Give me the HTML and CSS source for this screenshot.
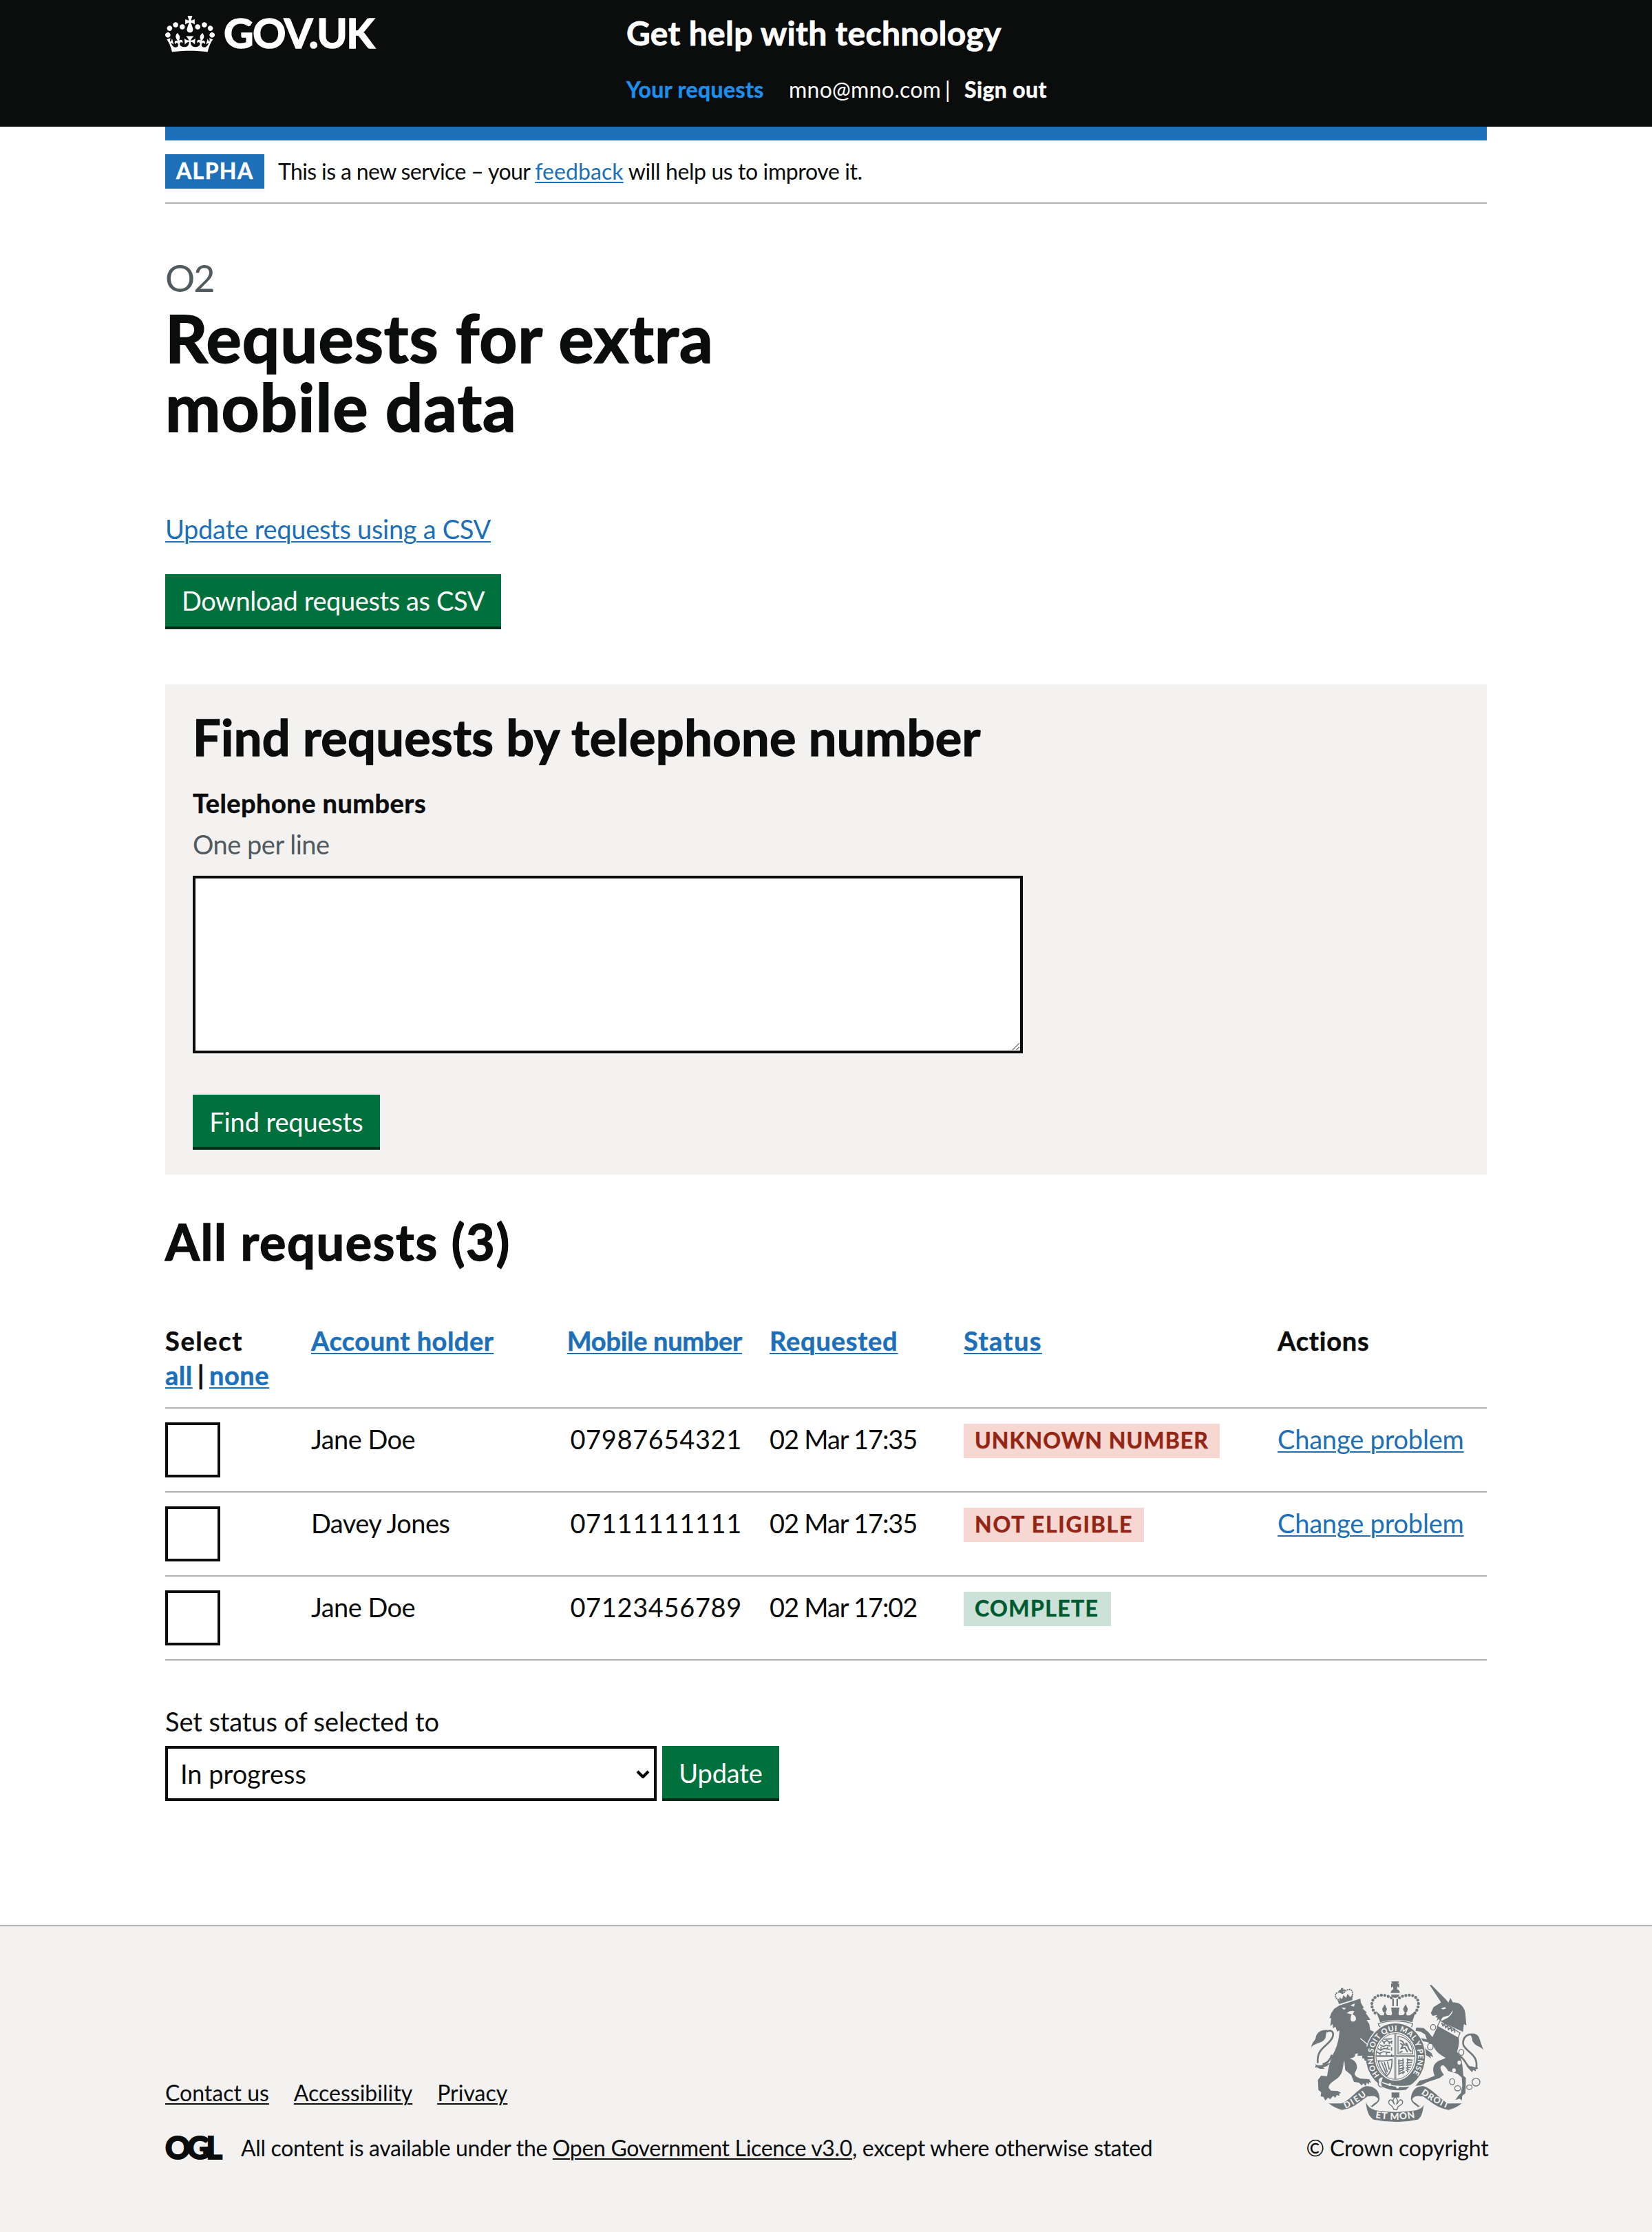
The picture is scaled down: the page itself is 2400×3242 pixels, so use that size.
FILE: index.html
```html
<!DOCTYPE html>
<html lang="en">
<head>
<meta charset="utf-8">
<title>Requests for extra mobile data – Get help with technology – GOV.UK</title>
<link rel="stylesheet" href="styles.css">
</head>
<body>
<header class="header">
  <div class="container header-grid">
    <a class="logo" href="#">
      <svg class="logo-crown" viewBox="0 0 132 97" width="72" height="53" aria-hidden="true"><path fill="currentColor" fill-rule="evenodd" d="M25 30.2c3.5 1.5 7.7-.2 9.1-3.7 1.5-3.6-.2-7.8-3.9-9.2-3.6-1.4-7.6.3-9.1 3.9-1.4 3.5.3 7.5 3.9 9zM9 39.5c3.6 1.5 7.8-.2 9.2-3.7 1.5-3.6-.2-7.8-3.9-9.1-3.6-1.5-7.6.2-9.1 3.8-1.4 3.5.3 7.5 3.8 9zM4.4 57.2c3.5 1.5 7.7-.2 9.1-3.8 1.5-3.6-.2-7.7-3.9-9.1-3.5-1.5-7.6.3-9.1 3.8-1.4 3.5.3 7.6 3.9 9.1zm38.3-21.4c3.5 1.5 7.7-.2 9.1-3.8 1.5-3.6-.2-7.7-3.9-9.1-3.6-1.5-7.6.3-9.1 3.8-1.3 3.6.4 7.7 3.9 9.1zm64.4-5.6c-3.6 1.5-7.8-.2-9.1-3.7-1.5-3.6.2-7.8 3.8-9.2 3.6-1.4 7.7.3 9.2 3.9 1.3 3.5-.4 7.5-3.9 9zm15.9 9.3c-3.6 1.5-7.7-.2-9.1-3.7-1.5-3.6.2-7.8 3.7-9.1 3.6-1.5 7.7.2 9.2 3.8 1.5 3.5-.3 7.5-3.8 9zm4.7 17.7c-3.6 1.5-7.8-.2-9.2-3.8-1.5-3.6.2-7.7 3.9-9.1 3.6-1.5 7.7.3 9.2 3.8 1.3 3.5-.4 7.6-3.9 9.1zM89.3 35.8c-3.6 1.5-7.8-.2-9.2-3.8-1.4-3.6.2-7.7 3.9-9.1 3.6-1.5 7.7.3 9.2 3.8 1.4 3.6-.3 7.7-3.9 9.1zM69.7 17.7l8.9 4.7V9.3l-8.9 2.8c-.2-.3-.5-.6-.9-.9L72.4 0H59.6l3.5 11.2c-.3.3-.6.5-.9.9l-8.8-2.8v13.1l8.8-4.7c.3.3.6.7.9.9l-5 15.4v.1c-.2.8-.4 1.6-.4 2.4 0 4.1 3.1 7.5 7 8.1h.2c.3 0 .7.1 1 .1.4 0 .7 0 1-.1h.2c4-.6 7.1-4.1 7.1-8.1 0-.8-.1-1.7-.4-2.4V34l-5.1-15.4c.4-.2.7-.6 1-.9zM66 92.8c16.9 0 32.8 1.1 47.1 3.2 4-16.9 8.9-26.7 14-33.5l-9.6-3.4c1 4.9 1.1 7.2 0 10.2-1.5-1.4-3-4.3-4.2-8.7L108.6 76c2.8-2 5-3.2 7.5-3.3-4.4 9.4-10 11.9-13.6 11.2-4.3-.8-6.3-4.6-5.6-7.9 1-4.7 5.7-5.9 8-.5 4.3-8.7-3-11.4-7.6-8.8 7.1-7.2 7.9-13.5 2.1-21.1-8 6.1-8.1 12.3-4.5 20.8-4.7-5.4-12.1-2.5-9.5 6.2 3.4-5.2 7.9-2 7.2 3.1-.6 4.3-6.4 7.8-13.5 7.2-10.3-.9-10.9-8-11.2-13.8 2.5-.5 7.1 1.8 11 7.3L80.2 60c-4.1 4.4-8 5.3-12.3 5.4 1.4-4.4 8-11.6 8-11.6H55.5s6.4 7.2 7.9 11.6c-4.2-.1-8-1-12.3-5.4l1.4 16.4c3.9-5.5 8.5-7.7 10.9-7.3-.3 5.8-.9 12.8-11.1 13.8-7.2.6-12.9-2.9-13.5-7.2-.7-5 3.8-8.3 7.1-3.1 2.7-8.7-4.6-11.6-9.4-6.2 3.7-8.5 3.6-14.7-4.6-20.8-5.8 7.6-5 13.9 2.2 21.1-4.7-2.6-11.9.1-7.7 8.8 2.3-5.5 7.1-4.2 8.1.5.7 3.3-1.3 7.1-5.7 7.9-3.5.7-9-1.8-13.5-11.2 2.5.1 4.7 1.3 7.5 3.3l-4.7-15.4c-1.2 4.4-2.7 7.2-4.3 8.7-1.1-3-.9-5.3 0-10.2l-9.5 3.4c5 6.9 9.9 16.7 14 33.5 14.8-2.1 30.8-3.2 47.7-3.2z"/></svg>
      <span class="logo-text">GOV.UK</span>
    </a>
    <div class="header-content">
      <a class="service-name" href="#">Get help with technology</a>
      <nav class="nav">
        <a class="nav-active" href="#">Your requests</a>
        <span class="nav-user"><span class="nav-email">mno@mno.com</span> <span class="nav-bar">|</span></span>
        <a class="nav-link" href="#">Sign out</a>
      </nav>
    </div>
  </div>
</header>

<div class="container">
  <div class="phase-banner">
    <strong class="phase-tag">Alpha</strong>
    <span class="phase-text">This is a new service – your <a class="link phase-link" href="#">feedback</a><span class="phase-tail"> will help us to improve it.</span></span>
  </div>

  <main class="main">
    <span class="caption">O2</span>
    <h1 class="title">Requests for extra mobile data</h1>
    <p class="csv-link"><a class="link" href="#">Update requests using a CSV</a></p>
    <a class="button button-download" href="#">Download requests as CSV</a>

    <form class="finder">
      <h2 class="heading finder-heading">Find requests by telephone number</h2>
      <label class="label" for="numbers">Telephone numbers</label>
      <span class="hint">One per line</span>
      <div class="textarea-wrap">
        <textarea class="textarea" id="numbers"></textarea>
        <svg class="grip" viewBox="0 0 12 12" width="12" height="12" aria-hidden="true"><path d="M1 11 11 1M6.500 11 11 6.500" stroke="#777" stroke-width="1.300" fill="none"/></svg>
      </div>
      <button class="button button-find" type="button">Find requests</button>
    </form>

    <h2 class="heading list-heading">All requests (3)</h2>
    <table class="table">
      <colgroup><col class="c-select"><col class="c-holder"><col class="c-mobile"><col class="c-requested"><col class="c-status"><col class="c-actions"></colgroup>
      <thead>
        <tr>
          <th><span class="h-select">Select</span><br><a class="link" href="#">all</a><span class="pipe">|</span><a class="link" href="#">none</a></th>
          <th><a class="link" href="#">Account holder</a></th>
          <th class="num-head"><a class="link" href="#">Mobile number</a></th>
          <th class="h-wide"><a class="link" href="#">Requested</a></th>
          <th class="h-status"><a class="link" href="#">Status</a></th>
          <th class="h-wide">Actions</th>
        </tr>
      </thead>
      <tbody>
        <tr>
          <td class="check"><input class="checkbox" type="checkbox"></td>
          <td class="name">Jane Doe</td>
          <td class="num">07987654321</td>
          <td class="date">02 Mar 17:35</td>
          <td class="status"><strong class="tag tag-red tag-unknown">Unknown number</strong></td>
          <td class="action"><a class="link" href="#">Change problem</a></td>
        </tr>
        <tr>
          <td class="check"><input class="checkbox" type="checkbox"></td>
          <td class="name">Davey Jones</td>
          <td class="num">07111111111</td>
          <td class="date">02 Mar 17:35</td>
          <td class="status"><strong class="tag tag-red tag-ineligible">Not eligible</strong></td>
          <td class="action"><a class="link" href="#">Change problem</a></td>
        </tr>
        <tr>
          <td class="check"><input class="checkbox" type="checkbox"></td>
          <td class="name">Jane Doe</td>
          <td class="num">07123456789</td>
          <td class="date">02 Mar 17:02</td>
          <td class="status"><strong class="tag tag-green tag-complete">Complete</strong></td>
          <td></td>
        </tr>
      </tbody>
    </table>

    <label class="status-label" for="status">Set status of selected to</label>
    <div class="status-row">
      <div class="select-wrap">
        <select class="select" id="status"><option>In progress</option></select>
        <svg class="chevron" viewBox="0 0 20 12" width="20" height="12" aria-hidden="true"><path d="M2 2l8 8 8-8" fill="none" stroke="#000" stroke-width="4.200"/></svg>
      </div>
      <button class="button button-update" type="button">Update</button>
    </div>
  </main>
</div>

<footer class="footer">
  <div class="container footer-row">
    <div class="footer-main">
      <ul class="footer-links">
        <li><a class="footer-link" href="#">Contact us</a></li>
        <li><a class="footer-link" href="#">Accessibility</a></li>
        <li><a class="footer-link" href="#">Privacy</a></li>
      </ul>
      <div class="licence">
        <span class="ogl">OGL</span>
        <span class="licence-text">All content is available under the <a class="footer-link" href="#">Open Government Licence v3.0</a>, except where otherwise stated</span>
      </div>
    </div>
    <a class="copyright" href="#">
      <svg class="crest" viewBox="132 114 750 612" width="250" height="204" aria-hidden="true">
        <defs>
          <path id="garter" d="M430 523A98 113 0 1 1 568 523"/>
          <path id="ribbon-left" d="M281 669Q328 648 376 608"/>
          <path id="ribbon-right" d="M610 603Q652 636 728 670"/>
          <path id="ribbon-mid" d="M411 709Q500 724 590 707"/>
        </defs>
        <g class="ink">
          <!-- lion -->
          <path d="M232 233l22-14 92-30 2 18 13 22-6 3 19 17-4 4 20 28-17 2 12 17 4 26 18 8-8 24-12 27 12 20 14 38-1 30-12-3-9 9-4-10-14 1 3-11-12 0 6-14-15 6-2-14-20 2 3-12-14 4c4 10-4 16-24 19 34 8 40 38 26 58-8 11 0 23 24 30l36 2 10 16-10-3-2 10-8-9-4 16-12-12-6 10-12-13-22-3-12-30-26-22-4-42c-8 24-2 56-30 78-14 10-40 24-38 42l10 12 30 2 14 8-9 3 2 10-12-4-6 12-10-8-12 14-10-6-12 12-8-16-12-2 2-18-12-10-2-44 14-18 26 2c6-40 14-70 26-96 20-36 26-70 28-104l-10 6-8-22-10 8-2-20-10 10 4-36-8 2 8-22z"/>
          <path d="M160 470c-6-70 50-72 66-116 6-22-12-32-26-20" fill="none" stroke="#6f777b" stroke-width="8"/>
          <path d="M222 434c-8 26-20 36-40 42" fill="none" stroke="#6f777b" stroke-width="9"/>
          <path d="M204 326c-24-4-48 8-52 30-2 18-18 20-20 46 12-20 46-16 60-38 6-14 2-24 12-38zM146 470c8 12 22 12 40 6l30-8c-12 16-24 20-34 18l8 8c-16 2-26 2-32-6l-10 2 4-10z"/>
          <path d="M244 190l9 23 58-18 1-24-10 12-12-15-6 18-12-12-6 18-10-10-2 18z"/>
          <path d="M262 143l10 0-2 7 8-2 1 9-8 0 2 10-10 2-2-9-8 2-2-8 9-4z"/>
          <path d="M250 194c-14-6-18-22-6-30 8-5 14-4 20 0m12-3c10-14 30-16 34-4 4 10 2 20-2 26" class="beads"/>
          <!-- unicorn -->
          <path d="M648 130l8 0 62 62 12 14 8-20 12 20c36-4 54 30 54 54l4 46-11-6-4 34-26-12-72-34 30-14c14-10 24-24 24-34l-16 22-28 8-10 16-8-8-8 8 4-14-10-2 8-10-20 4-8-12 12-26 32-20-4-8z"/>
          <path d="M684 307l91 54c4 26-4 46-8 60 20 18 24 52 28 104l11 10-2 66-14 12-2 20-10-8-18 6 12-18 12-12 6-32-2-36-18-16-40-12c-8-10-14-22-24-26-18 4-12 20 4 42l-18 14-54 18-30 14-22 2 18-22 32-8 34-14c-14-30-8-60 36-72l12-6c-24-14-42-24-54-52-10-12-30-22-54-20l22 34 24 18 8 18-14-8 4 12-18-12-16-2-2-14-12-12-8-26-14-4 6-18 20 0 26 6-8-22-20-12-22-4 4-14 32 2 22 20 16 20z"/>
          <path d="M776 436c28 18 28 40 48 56M846 346c-26-6-56 4-52 42 6 32 72 42 56 108" fill="none" stroke="#6f777b" stroke-width="8"/>
          <path d="M822 345c26-10 42 6 44 22l16 46c-14-18-38-16-48-40 0-10-2-20-12-28zM806 470c10 18 28 12 38 18l10-2 6 8-12 2 2 10-12-6-6 10c-10-16-24-20-26-40z"/>
          <!-- imperial crown -->
          <path d="M480 114h35l-7 11 7-3v20l-8-6-2 13h-15l-2-13-8 6v-20l7 3zM478 164a20 18 0 0 1 40 0zM480 172h36c-2 8-6 12-18 14-12-2-16-6-18-14zM485 190h7v32h-7zM503 190h7v32h-7z"/>
          <path d="M414 242l20 20 14 0 4-20 10 18 18 2 4-6-4-28h36l-4 28 4 6 18-2 10-18 4 20 14 0 26-20-16 50q-72-20-140 0z"/>
          <path d="M452 214l10 20-5 14h-12l-4-14zM543 214l10 20-4 14h-12l-5-14z"/>
          <path d="M410 252c-30-40-8-76 26-78 22 0 36 6 46 12M584 252c30-40 12-76-22-78-22 0-40 6-46 12" fill="none" stroke="#6f777b" stroke-width="13" stroke-linecap="round" stroke-dasharray="0 15"/>
          <path d="M424 298q74-24 150 0-2 18-18 20l-112 0q-18-4-20-20z" fill="#f3f2f1" stroke="#6f777b" stroke-width="4"/>
          <!-- garter and shield -->
          <ellipse cx="499" cy="441" rx="133" ry="149" class="paper"/>
          <ellipse cx="499" cy="441" rx="110" ry="125" fill="none" stroke="#6f777b" stroke-width="38"/>
          <ellipse cx="499" cy="441" rx="85" ry="100" fill="#f3f2f1" stroke="#6f777b" stroke-width="3"/>
          <path d="M413 440h172M498 340v200" stroke="#6f777b" stroke-width="8"/>
          <path d="M413 440h172M498 340v200" stroke="#f3f2f1" stroke-width="2"/>
          <path d="M446 366l38-2m-44 6l8 10 14-9 10 9 14-6m-54 16l14 8 12-6 20 4m-56 10l12 8 16-8 26 4m-62 10l16 8 16-8 30 4M450 376v12m22-12v12M436 398v12m28-12v12M432 424v10m28-10v10m22-62v14m0 14v16m0 14v12M510 462l22-4m-22 14l26-4m-24 16l22-6m-22 18l26-6m-24 16l22-8m-22 18l26-8M548 454l26 4m-28 12l26-4m-26 14l24-2m-26 14l22-4m-22 14l16-4M514 454v68m18-72v68m20-68v60" fill="none" stroke="#6f777b" stroke-width="5"/>
          <path d="M510 354v76h64c2-40-24-74-64-76z" fill="none" stroke="#6f777b" stroke-width="4"/>
          <path d="M518 370l12 6 8 14 14 4 6 16 10 10m-48-36l12 8-8 14 16-4 12 20m-22-4l-14 6m36-34l-10-8" fill="none" stroke="#6f777b" stroke-width="6"/>
          <path d="M424 460q32 4 60-6c0 34-6 60-24 72q-28-26-36-66zM438 466l22 52m-10-52l14 44m0-46l8 34" fill="none" stroke="#6f777b" stroke-width="5"/>
          <path d="M428 548q70 34 140 20l-22 20q-60 12-112-16z" stroke="#f3f2f1" stroke-width="5"/>
          <path d="M446 530c-20 0-26 14-20 24-8 14 8 24 18 18-12-14 0-22 2-42z" fill="#f3f2f1" stroke="#6f777b" stroke-width="4"/>
          <path d="M344 362l26 28 16 30 16 20 2 32-14-6-8 6-2-14-14 2-8-20z"/>
          <path d="M346 362l32 28" stroke="#f3f2f1" stroke-width="4"/>
          <!-- pendant -->
          <path d="M482 598h34v22h-34z"/>
          <path d="M498 614l10 18-4 16c8-4 6-16 16-18 12 0 14 16 2 22l-12 8-4 12h-14l-6-12-10-8c-10-6-8-22 4-22 10 2 8 14 14 18l-6-16z" fill="#f3f2f1" stroke="#6f777b" stroke-width="4"/>
          <!-- ribbons -->
          <path d="M208 646l54 0c40-14 64-56 102-74 40-6 66 18 66 54-4 20-24 26-32 36-16-8-14-18-2-28l-4-18-14-2c-40 28-60 52-112 60q-28-6-58-28z"/>
          <path d="M382 616c20-6 38 0 42 12-4 14-24 18-30 30-18-10-22-28-12-42z" class="paper"/>
          <path d="M788 646l-54 0c-40-14-62-54-106-74-40-8-60 20-62 54 4 20 22 26 32 36 16-8 14-18 2-28l4-18 14-2c40 28 62 50 112 60q30-6 58-28z"/>
          <path d="M614 616c-20-6-38 0-42 12 4 14 22 18 30 30 18-10 22-28 12-42z" class="paper"/>
          <path d="M370 640q10 28 42 36 86 14 176 0 28-8 34-24-6 54-26 64-94 20-192 0c-18-10-30-30-34-76z"/>
        </g>
        <g class="paper">
          <path d="M264 228l20 2-10 8zM302 218l20-8-4 14zM286 252q18-14 34-8l-8 14q18 6 14 24-10 14-22 2-2-18 4-26zM698 232l16-6 6 6-14 4z"/>
          <path d="M694 284l86 54-8 22-90-50z" stroke="#6f777b" stroke-width="4"/>
          <circle cx="474" cy="564" r="6"/><circle cx="508" cy="575" r="6"/>
          <ellipse cx="777" cy="468" rx="8" ry="9"/><ellipse cx="754" cy="502" rx="8" ry="9"/>
        </g>
        <path d="M700 294l6 14 6-10 6 18 8-10 4 18 10-10 4 16 12-8 2 16" fill="none" stroke="#6f777b" stroke-width="5"/>
        <g class="chain">
          <ellipse cx="663" cy="314" rx="11" ry="12"/><ellipse cx="651" cy="398" rx="12" ry="14"/><ellipse cx="786" cy="423" rx="11" ry="13"/><ellipse cx="746" cy="551" rx="11" ry="13"/><ellipse cx="770" cy="580" rx="13" ry="11"/><ellipse cx="821" cy="575" rx="12" ry="10"/><circle cx="850" cy="553" r="17" fill="none"/>
        </g>
        <g class="motto">
          <text font-size="33"><textPath href="#garter" textLength="495">HONI SOIT QUI MAL Y PENSE</textPath></text>
          <text font-size="38"><textPath href="#ribbon-left" textLength="110">DIEU</textPath></text>
          <text font-size="38"><textPath href="#ribbon-right" textLength="132">DROIT</textPath></text>
          <text font-size="41"><textPath href="#ribbon-mid" textLength="174">ET MON</textPath></text>
        </g>
      </svg>
      <span class="copyright-text">© Crown copyright</span>
    </a>
  </div>
</footer>
</body>
</html>
```
FILE: styles.css
```css
*, *::before, *::after { box-sizing: border-box; }
body {
  margin: 0;
  background: #fff;
  color: #0b0c0c;
  font: 38px/50px Lato, "Noto Sans", sans-serif;
}
h1, h2, p, ul { margin: 0; padding: 0; }
a { color: inherit; text-decoration: none; }
strong, th, .label, .nav-active, .nav-link { -webkit-text-stroke: .5px currentColor; }
.container { width: 1920px; margin: 0 auto; }
.link {
  color: #1d70b8;
  text-decoration: underline;
  text-decoration-thickness: 2px;
  text-underline-offset: 3px;
}

/* Header */
.header { height: 184px; background: #0b0c0c; color: #fff; }
.header-grid { display: grid; grid-template-columns: 670px 1fr; padding-top: 17px; }
.logo { display: flex; align-items: flex-start; gap: 13px; }
.logo-crown { margin-top: 6px; }
.logo-text { font-size: 60px; line-height: 60px; font-weight: 700; letter-spacing: -1.5px; -webkit-text-stroke: 1.6px #fff; }
.service-name { display: block; padding-top: 1px; font-size: 48px; line-height: 60px; font-weight: 700; letter-spacing: .3px; -webkit-text-stroke: .8px #fff; }
.nav { display: flex; margin-top: 32px; font-size: 32px; line-height: 40px; font-weight: 700; letter-spacing: .4px; }
.nav-active { width: 236px; color: #1d8feb; }
.nav-user { width: 255px; font-weight: 400; letter-spacing: .25px; word-spacing: -3px; }

/* Phase banner */
.phase-banner {
  display: flex;
  height: 112px;
  padding-top: 20px;
  border-top: 20px solid #1d70b8;
  border-bottom: 2px solid #b1b4b6;
  font-size: 32px;
  line-height: 48px;
}
.phase-tag {
  width: 144px;
  height: 50px;
  margin-right: 20px;
  padding-left: 16px;
  background: #1d70b8;
  color: #fff;
  letter-spacing: 1.4px;
  text-transform: uppercase;
}
.phase-text { padding-top: 1px; letter-spacing: -.62px; }
.phase-link { letter-spacing: .1px; }
.phase-tail { letter-spacing: -.4px; }

/* Main */
.main { padding: 78px 0 180px; }
.caption { display: block; margin-bottom: 6px; color: #505a5f; font-size: 54px; line-height: 60px; letter-spacing: -2px; }
.title { max-width: 1000px; font-size: 96px; line-height: 100px; letter-spacing: 1px; -webkit-text-stroke: 1.8px currentColor; }
.csv-link { margin: 103px 0 41px; letter-spacing: -.3px; }
.button {
  display: block;
  height: 80px;
  padding: 1px 0 0;
  border: 0;
  border-bottom: 4px solid #002d18;
  background: #00703c;
  color: #fff;
  font: inherit;
  line-height: 74px;
  text-align: center;
  letter-spacing: -.12px;
}
.button-download { width: 488px; letter-spacing: -.4px; }
.button-find { width: 272px; }
.button-update { width: 170px; }

.finder { margin-top: 80px; padding: 38px 40px 36px; background: #f3f2f1; }
.heading { font-size: 72px; line-height: 76px; letter-spacing: .4px; -webkit-text-stroke: 1.4px currentColor; }
.label { display: block; margin-top: 33px; font-weight: 700; letter-spacing: .45px; }
.hint { display: block; margin-top: 10px; color: #505a5f; letter-spacing: -.5px; }
.textarea-wrap { position: relative; width: 1206px; height: 258px; margin: 21px 0 60px; }
.textarea {
  display: block;
  width: 100%;
  height: 100%;
  border: 4px solid #0b0c0c;
  border-radius: 0;
  background: #fff;
  font: inherit;
  resize: none;
}
.grip { position: absolute; right: 4px; bottom: 4px; }

.list-heading { margin-top: 59px; letter-spacing: 1.6px; }

/* Requests table */
.table { width: 1920px; margin-top: 60px; table-layout: fixed; border-spacing: 0; }
.c-select { width: 212px; }
.c-holder { width: 346px; }
.c-mobile { width: 320px; }
.c-requested { width: 282px; }
.c-status { width: 456px; }
.c-actions { width: 304px; }
.table th, .table td { padding: 19px 0 0; border-bottom: 2px solid #b1b4b6; text-align: left; vertical-align: top; }
.table th { height: 145px; padding-top: 21px; letter-spacing: .5px; }
.table td { height: 122px; }
.table td.check { padding-top: 20px; }
.table td.status { padding-top: 22px; }
.table .num, .table .num-head { padding-right: 40px; text-align: right; }
.table th.num-head { letter-spacing: -.3px; }
.table th.h-wide { letter-spacing: .8px; }
.table th.h-status { letter-spacing: 1.4px; }
.h-select { letter-spacing: 1.6px; }
.name { letter-spacing: -.55px; }
.num { letter-spacing: .65px; }
.date { letter-spacing: -1.15px; }
.action { letter-spacing: -.2px; }
.pipe { margin: 0 7px; }
.checkbox {
  display: block;
  width: 80px;
  height: 80px;
  margin: 0;
  border: 4px solid #0b0c0c;
  appearance: none;
  background: #fff;
}
.tag {
  display: block;
  height: 50px;
  padding-left: 16px;
  font-size: 32px;
  line-height: 48px;
  letter-spacing: 1.4px;
  text-transform: uppercase;
}
.tag-red { background: #f6d7d2; color: #942514; }
.tag-green { background: #cce2d8; color: #005a30; }
.tag-unknown { width: 372px; letter-spacing: 1.05px; }
.tag-ineligible { width: 262px; letter-spacing: 1.75px; }
.tag-complete { width: 214px; }

.status-label { display: block; margin: 63px 0 11px; letter-spacing: -.1px; }
.status-row { display: flex; gap: 8px; }
.select-wrap { position: relative; width: 714px; }
.select {
  width: 714px;
  height: 80px;
  padding: 0 18px;
  border: 4px solid #0b0c0c;
  border-radius: 0;
  appearance: none;
  background: #fff;
  color: #0b0c0c;
  font: inherit;
}
.chevron { position: absolute; right: 10px; top: 35px; }

/* Footer */
.footer { height: 446px; padding-top: 80px; border-top: 2px solid #b1b4b6; background: #f3f2f1; font-size: 32px; line-height: 40px; }
.footer-row { display: flex; justify-content: space-between; align-items: flex-end; }
.footer-links { display: flex; gap: 36px; list-style: none; }
.footer-link { text-decoration: underline; text-decoration-thickness: 2px; text-underline-offset: 3px; }
.licence { display: flex; margin-top: 40px; }
.ogl { width: 110px; font: 900 45px/38px Lato, sans-serif; letter-spacing: -4.8px; -webkit-text-stroke: 2px #0b0c0c; }
.licence-text { letter-spacing: -.33px; }
.copyright { display: flex; flex-direction: column; align-items: center; width: 262px; margin-right: -1px; }
.copyright-text { margin-top: 18px; white-space: nowrap; letter-spacing: -.2px; }
.crest .ink { fill: #6f777b; }
.crest .paper { fill: #f3f2f1; }
.crest .beads { fill: none; stroke: #6f777b; stroke-width: 7; stroke-linecap: round; stroke-dasharray: 0 9; }
.crest .chain { fill: #f3f2f1; stroke: #6f777b; stroke-width: 4; }
.crest .motto { fill: #f3f2f1; font-weight: 900; letter-spacing: 0; }
```
